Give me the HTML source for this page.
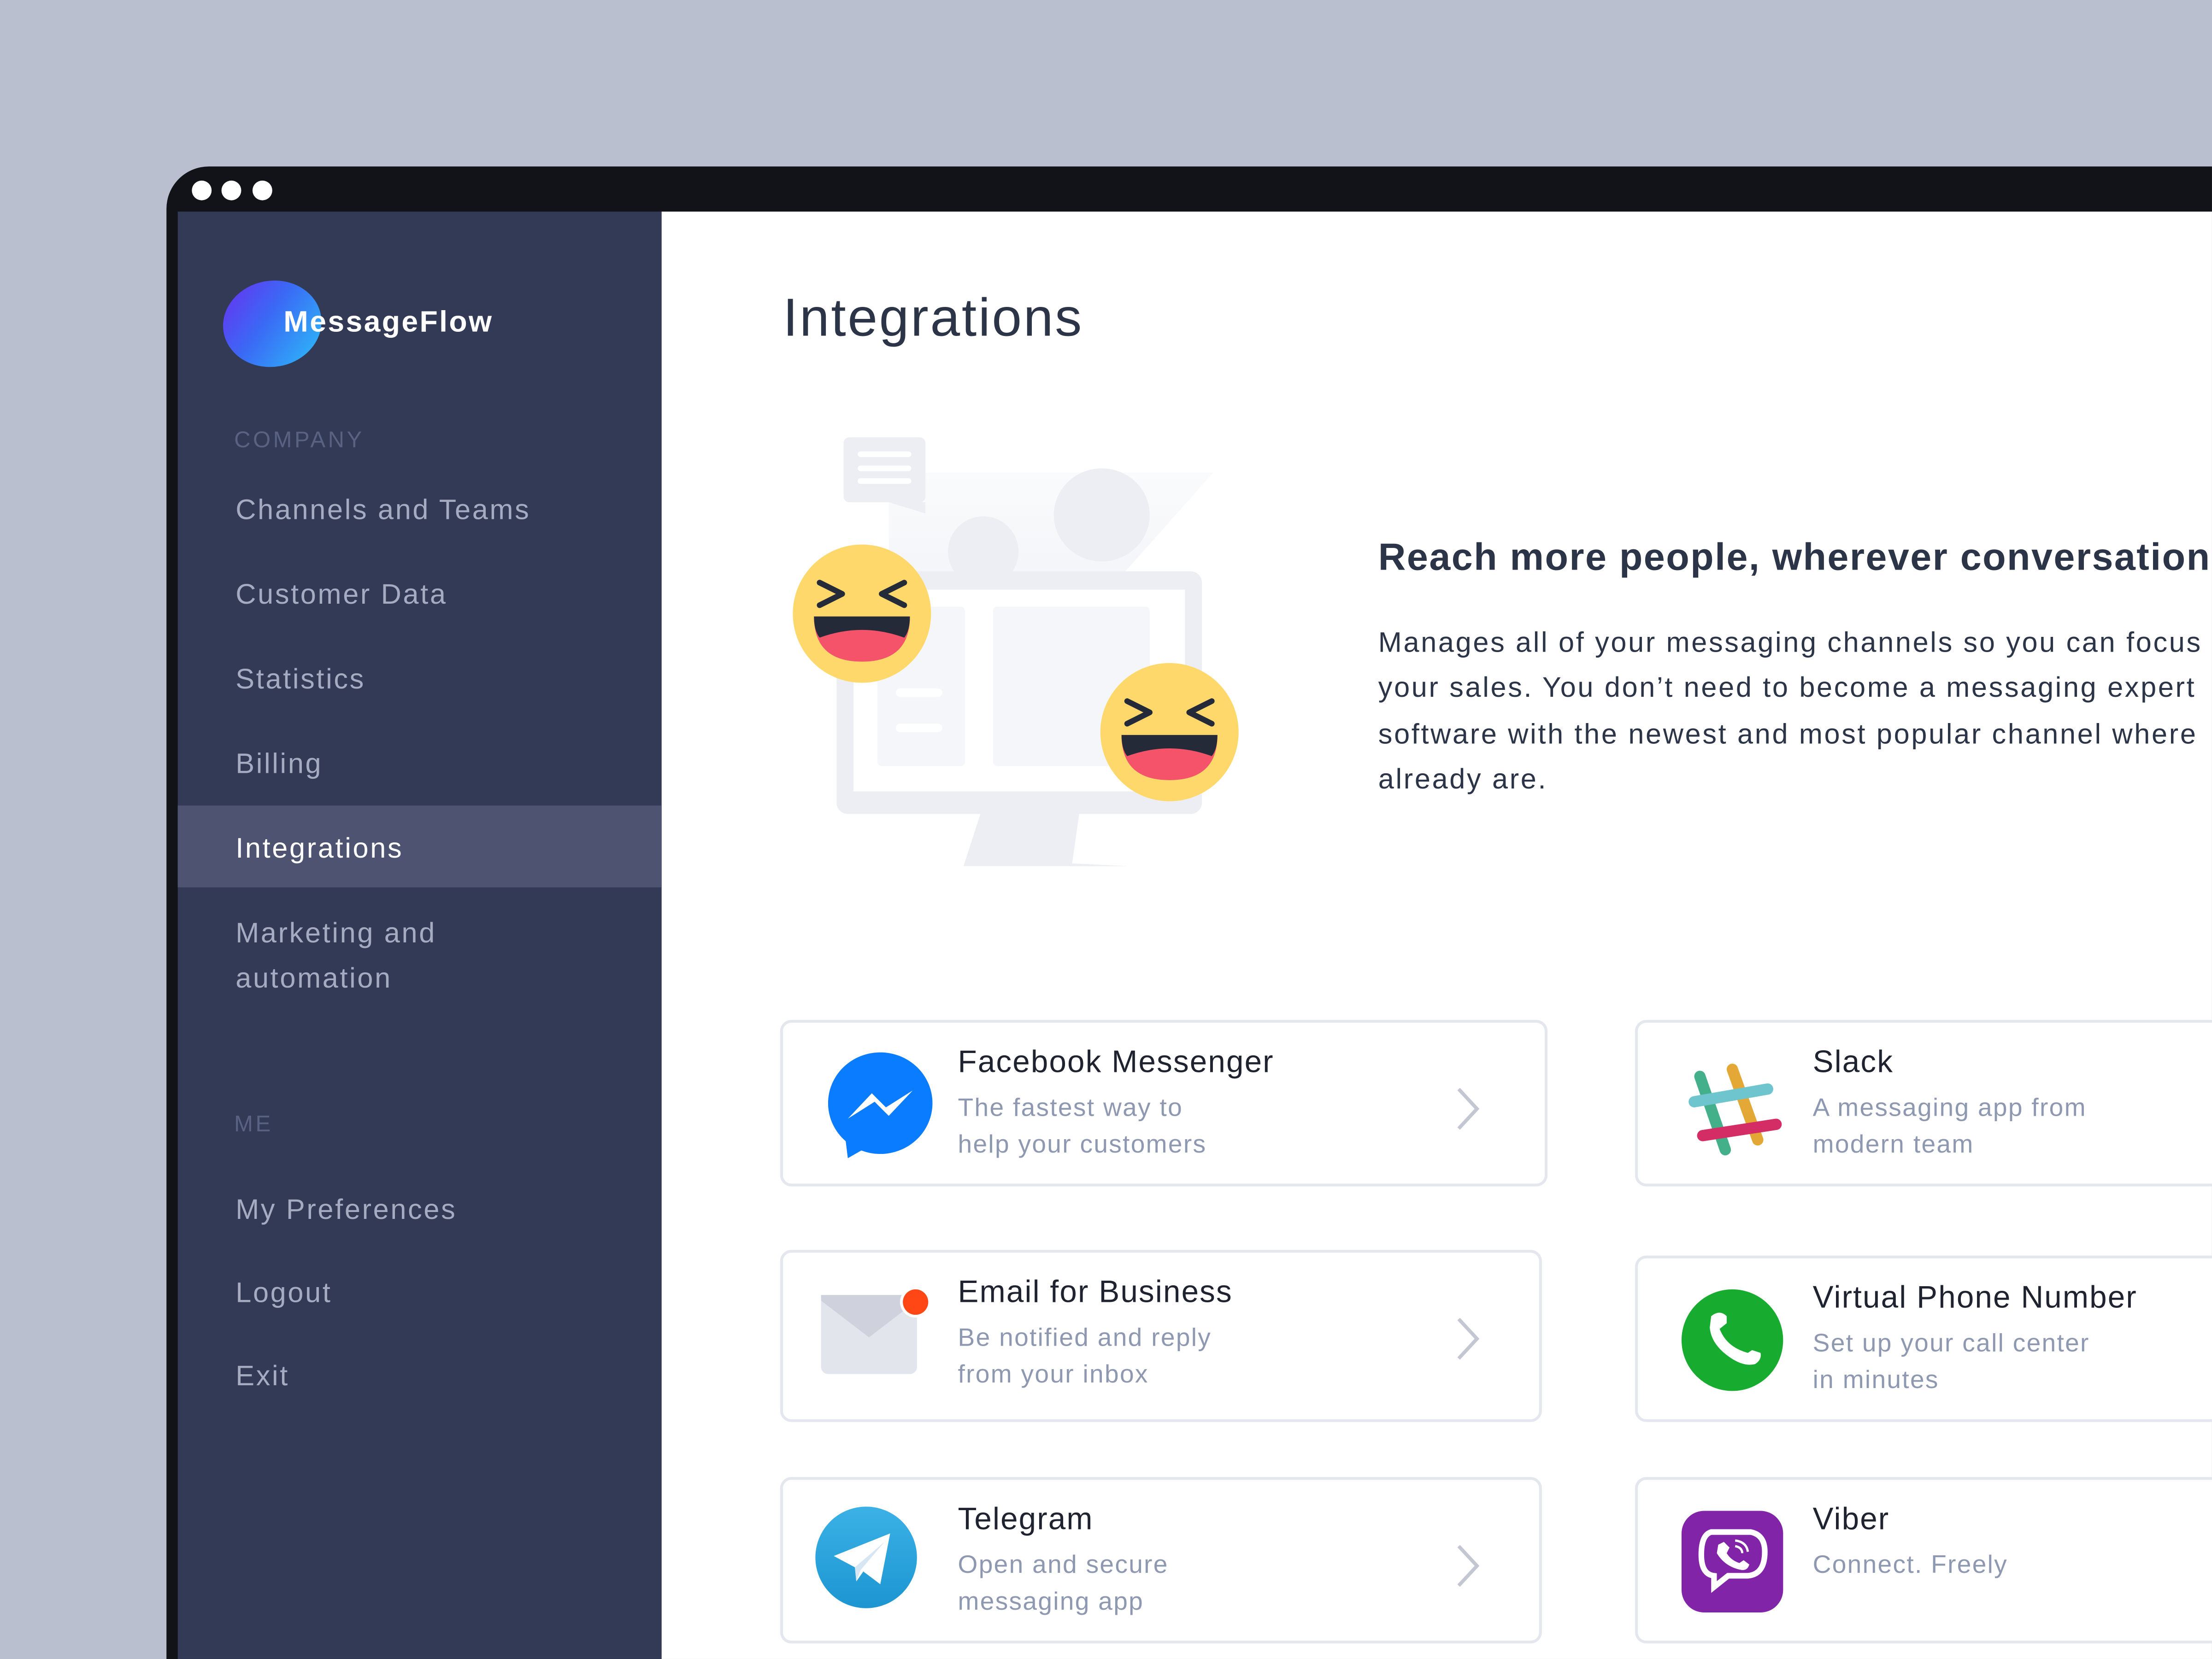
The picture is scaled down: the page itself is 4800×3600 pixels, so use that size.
<!DOCTYPE html>
<html><head><meta charset="utf-8"><style>
*{margin:0;padding:0;box-sizing:border-box}
html,body{width:4800px;height:3600px;overflow:hidden;background:#b9bfcf}
#w{position:absolute;left:0;top:0;width:1568px;height:1176px;overflow:hidden;transform:scale(3.0612);transform-origin:0 0;font-family:"Liberation Sans",sans-serif}
.a{position:absolute}
.nav{position:absolute;left:167px;color:#a5abc1;font-size:20px;letter-spacing:1.2px;white-space:nowrap}
.sec{position:absolute;left:166px;color:#5a6283;font-size:16px;letter-spacing:1.8px}
.card{position:absolute;border:2px solid #e4e7ed;border-radius:8px;background:#fff}
.t{position:absolute;left:124px;top:15px;font-size:22px;color:#1f2330;font-weight:500;letter-spacing:.7px;white-space:nowrap}
.d{position:absolute;left:124px;top:47px;font-size:18px;color:#8f98b1;line-height:26px;letter-spacing:.75px;white-space:nowrap}
.ch{position:absolute;left:476px;top:44px}
</style></head><body><div id="w">
<div class="a" style="left:118px;top:118px;width:1450px;height:1058px;background:#111318;border-radius:30px 0 0 0"></div>
<div class="a" style="left:136px;top:128px;width:14px;height:14px;border-radius:50%;background:#fff"></div>
<div class="a" style="left:157px;top:128px;width:14px;height:14px;border-radius:50%;background:#fff"></div>
<div class="a" style="left:179px;top:128px;width:14px;height:14px;border-radius:50%;background:#fff"></div>
<div class="a" style="left:126px;top:150px;width:343px;height:1026px;background:#333a56"></div>
<div class="a" style="left:469px;top:150px;width:1099px;height:1026px;background:#fff"></div>
<div class="a" style="left:158px;top:199px;width:70px;height:61px;border-radius:50%;background:linear-gradient(135deg,#6a2ef0 0%,#3a6af5 45%,#2cc0f8 100%);transform:rotate(-10deg)"></div>
<div class="a" style="left:201px;top:217px;color:#fff;font-size:21px;font-weight:bold;letter-spacing:1.1px">MessageFlow</div>
<div class="sec" style="top:304px">COMPANY</div>
<div class="nav" style="top:351px">Channels and Teams</div>
<div class="nav" style="top:411px">Customer Data</div>
<div class="nav" style="top:471px">Statistics</div>
<div class="nav" style="top:531px">Billing</div>
<div class="a" style="left:126px;top:571px;width:343px;height:58px;background:#4d5370"></div>
<div class="nav" style="top:591px;color:#fff">Integrations</div>
<div class="nav" style="line-height:32px;top:646px">Marketing and<br>automation</div>
<div class="sec" style="top:789px">ME</div>
<div class="nav" style="top:847px">My Preferences</div>
<div class="nav" style="top:906px">Logout</div>
<div class="nav" style="top:965px">Exit</div>

<div class="a" style="left:555px;top:205px;font-size:38px;color:#2c3447;letter-spacing:1.2px">Integrations</div>
<div class="a" style="left:977px;top:380px;font-size:27px;color:#2c3447;font-weight:bold;white-space:nowrap;letter-spacing:.8px">Reach more people, wherever conversations</div>
<div class="a" style="left:977px;top:440px;font-size:20px;color:#2c3447;line-height:32.3px;white-space:nowrap;letter-spacing:1.2px">Manages all of your messaging channels so you can focus<br>your sales. You don’t need to become a messaging expert<br>software with the newest and most popular channel where<br>already are.</div>

<svg class="a" style="left:555px;top:300px" width="330" height="320" viewBox="0 0 330 320">
<defs><linearGradient id="bm" x1="0" y1="0" x2="0" y2="1"><stop offset="0" stop-color="#fafbfc"/><stop offset="1" stop-color="#f3f4f8"/></linearGradient></defs>
<polygon points="75,35 305,35 225,125 75,125" fill="url(#bm)"/>
<rect x="43" y="10" width="58" height="46" rx="4" fill="#eceef3"/>
<polygon points="75,56 101,56 101,64" fill="#eceef3"/>
<rect x="53" y="20" width="38" height="4" rx="2" fill="#fff"/><rect x="53" y="30" width="38" height="4" rx="2" fill="#fff"/><rect x="53" y="39" width="38" height="4" rx="2" fill="#fff"/>
<ellipse cx="226" cy="65" rx="34" ry="33" fill="#eceef3"/>
<ellipse cx="142" cy="91" rx="25" ry="25" fill="#eceef3"/>
<rect x="38" y="105" width="259" height="172" rx="8" fill="#eceef3"/>
<rect x="50" y="118" width="235" height="143" fill="#fff"/>
<rect x="67" y="130" width="62" height="113" rx="3" fill="#f5f6fa"/>
<rect x="149" y="130" width="111" height="113" rx="3" fill="#f5f6fa"/>
<rect x="80" y="188" width="33" height="6" rx="3" fill="#fff"/><rect x="80" y="213" width="33" height="6" rx="3" fill="#fff"/>
<polygon points="140,277 210,277 205,312 245,314 128,314" fill="#eceef3"/>
<g transform="translate(56,135)"><ellipse rx="49" ry="49" fill="#fed86b"/><path d="M-30,-22 L-14,-14 L-30,-6 M30,-22 L14,-14 L30,-6" stroke="#252a38" stroke-width="4" stroke-linecap="round" stroke-linejoin="round" fill="none"/><path d="M-34,2 H34 Q34,34 0,34 Q-34,34 -34,2Z" fill="#f4536a"/><path d="M-34,2 H34 Q34,12 30,17 Q0,6 -30,17 Q-34,12 -34,2Z" fill="#252a38"/></g>
<g transform="translate(274,219)"><ellipse rx="49" ry="49" fill="#fed86b"/><path d="M-30,-22 L-14,-14 L-30,-6 M30,-22 L14,-14 L30,-6" stroke="#252a38" stroke-width="4" stroke-linecap="round" stroke-linejoin="round" fill="none"/><path d="M-34,2 H34 Q34,34 0,34 Q-34,34 -34,2Z" fill="#f4536a"/><path d="M-34,2 H34 Q34,12 30,17 Q0,6 -30,17 Q-34,12 -34,2Z" fill="#252a38"/></g>
</svg>

<div class="card" style="left:553px;top:723px;width:544px;height:118px">
<svg class="a" style="left:32px;top:20px" width="76" height="78" viewBox="0 0 76 78"><ellipse cx="37" cy="37" rx="37" ry="36" fill="#0a7cff"/><path d="M12,60 L14,76 L28,68Z" fill="#0a7cff"/><path d="M14,48 L31,30 L41,40 L60,28 L43,46 L33,36Z" fill="#fff"/></svg>
<div class="t">Facebook Messenger</div><div class="d">The fastest way to<br>help your customers</div>
<svg class="ch" width="20" height="34"><path d="M3,3 L16,17 L3,31" stroke="#c3c7d1" stroke-width="2.5" fill="none"/></svg></div>

<div class="card" style="left:553px;top:886px;width:540px;height:122px">
<svg class="a" style="left:26px;top:24px" width="84" height="64" viewBox="0 0 84 64"><rect x="1" y="6" width="68" height="56" rx="5" fill="#e3e5ec"/><path d="M1,10 L35,36 L69,10 L69,6 L1,6Z" fill="#cfd2dc"/><path d="M3,30 L35,48 L67,30 L67,60 L3,60Z" fill="#e3e5ec"/><circle cx="68" cy="11" r="11" fill="#fff"/><circle cx="68" cy="11" r="9" fill="#ff4615"/></svg>
<div class="t">Email for Business</div><div class="d">Be notified and reply<br>from your inbox</div>
<svg class="ch" width="20" height="34"><path d="M3,3 L16,17 L3,31" stroke="#c3c7d1" stroke-width="2.5" fill="none"/></svg></div>

<div class="card" style="left:553px;top:1047px;width:540px;height:118px">
<svg class="a" style="left:22px;top:18px" width="74" height="74" viewBox="0 0 74 74"><defs><linearGradient id="tg" x1="0" y1="0" x2="0" y2="1"><stop offset="0" stop-color="#3bb1e6"/><stop offset="1" stop-color="#1c95d1"/></linearGradient></defs><circle cx="37" cy="37" r="36" fill="url(#tg)"/><path d="M14,36 L54,20 L47,56 L35,47 L30,54 L29,44Z" fill="#fff"/><path d="M29,44 L50,26 L33,46 L30,54Z" fill="#d6e6f2"/></svg>
<div class="t">Telegram</div><div class="d">Open and secure<br>messaging app</div>
<svg class="ch" width="20" height="34"><path d="M3,3 L16,17 L3,31" stroke="#c3c7d1" stroke-width="2.5" fill="none"/></svg></div>

<div class="card" style="left:1159px;top:723px;width:480px;height:118px">
<svg class="a" style="left:34px;top:28px" width="70" height="72" viewBox="0 0 70 72"><g stroke-width="8" stroke-linecap="round" opacity=".88"><path d="M10,10 L28,62" stroke="#2ba67b"/><path d="M33,5 L51,55" stroke="#e09c1b"/><path d="M6,28 L58,19" stroke="#5cbdc7"/><path d="M12,52 L64,44" stroke="#cf1150"/></g></svg>
<div class="t">Slack</div><div class="d">A messaging app from<br>modern team</div></div>

<div class="card" style="left:1159px;top:890px;width:480px;height:118px">
<svg class="a" style="left:30px;top:21px" width="74" height="74" viewBox="0 0 74 74"><circle cx="37" cy="37" r="36" fill="#17ab30"/><path d="M22,20 Q28,15 33,20 L33,25 L28,29 Q33,42 48,46 L51,44 L57,46 Q58,51 53,54 Q45,56 35,49 Q22,40 21,28Z" fill="#fff"/></svg>
<div class="t">Virtual Phone Number</div><div class="d">Set up your call center<br>in minutes</div></div>

<div class="card" style="left:1159px;top:1047px;width:480px;height:118px">
<svg class="a" style="left:30px;top:21px" width="74" height="74" viewBox="0 0 74 74"><rect x="1" y="1" width="72" height="72" rx="16" fill="#8224a8"/><path d="M22,16 H50 Q60,18 60,30 Q60,46 48,47 H34 L24,55 L24,47 Q15,46 15,32 Q15,18 22,16Z" fill="none" stroke="#fff" stroke-width="4"/><path d="M27,25 L31,23 L35,27 L33,31 Q36,36 42,38 L45,36 L49,39 Q48,43 44,43 Q32,41 26,31Z" fill="#fff"/><path d="M39,22 Q47,23 48,30 M39,26 Q44,27 44,31" stroke="#fff" stroke-width="1.6" fill="none"/></svg>
<div class="t">Viber</div><div class="d">Connect. Freely</div></div>
</div></body></html>
